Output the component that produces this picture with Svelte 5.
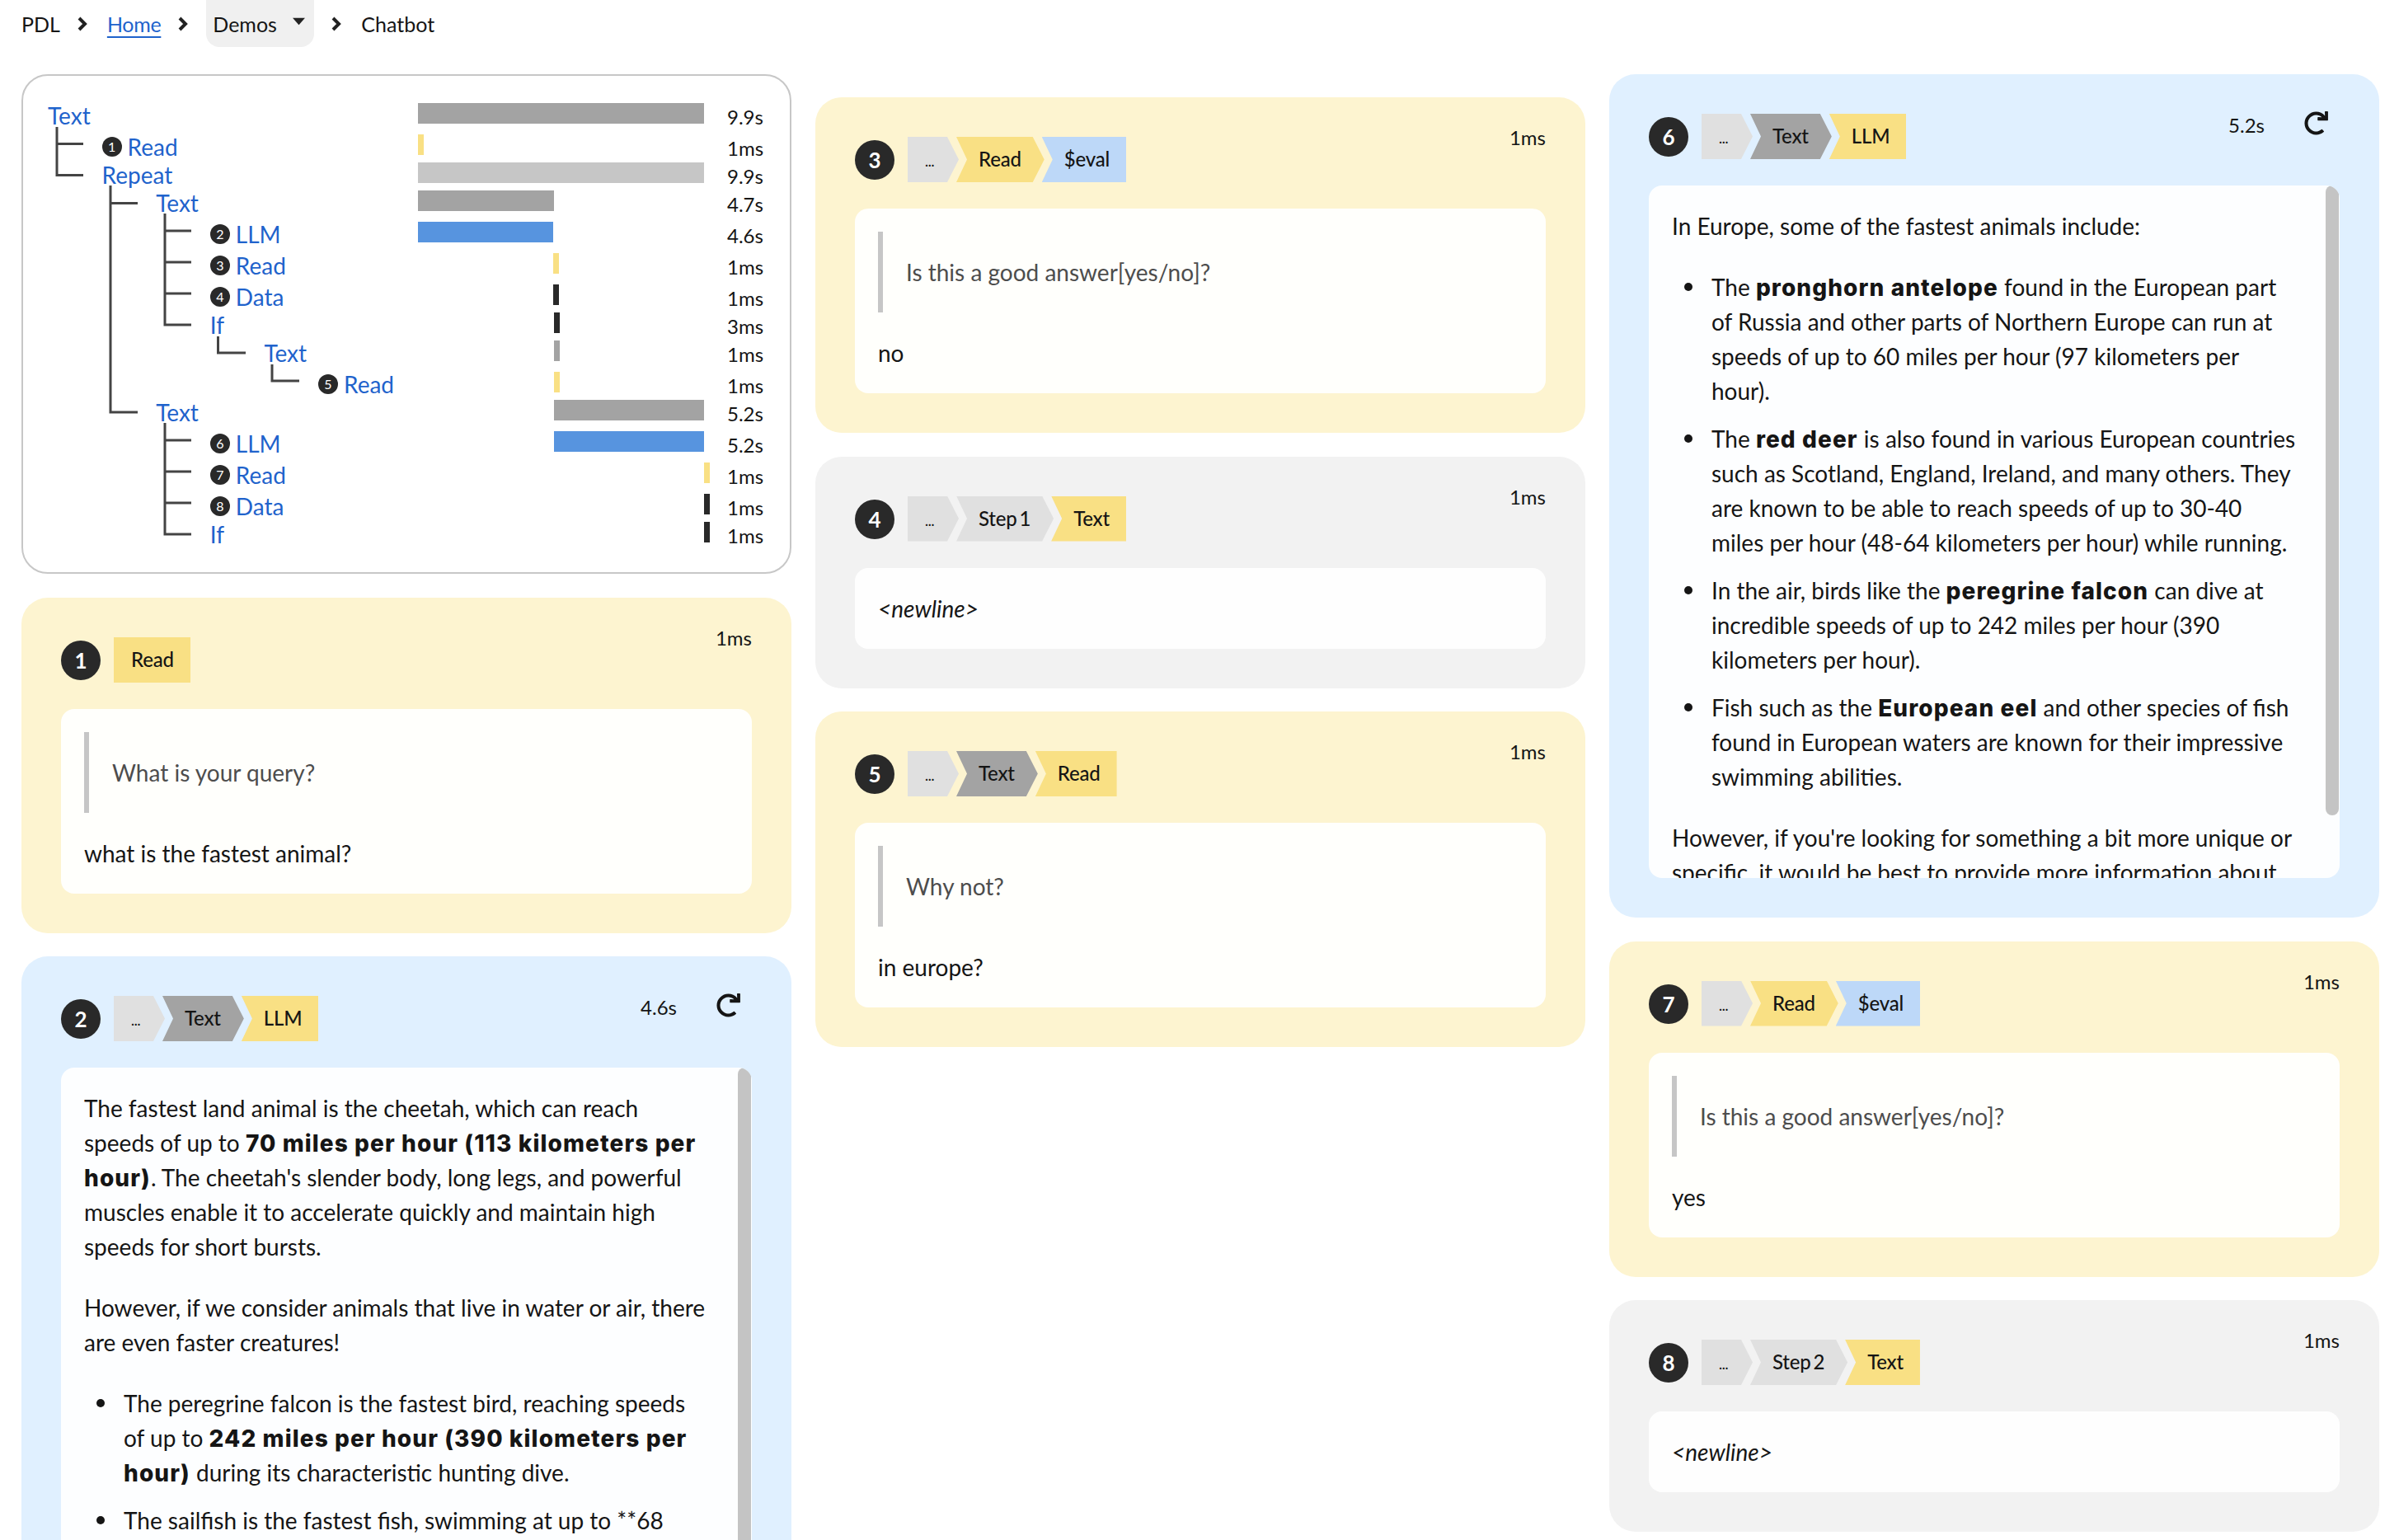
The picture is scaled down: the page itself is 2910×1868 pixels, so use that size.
<script>
  const tree = [
    { label: "Text", depth: 0, from: 0, to: 100, color: "grey", time: "9.9s" },
    { label: "Read", badge: 1, depth: 1, from: 0, to: 2, color: "yellow", time: "1ms" },
    { label: "Repeat", depth: 1, from: 0, to: 100, color: "light", time: "9.9s" },
    { label: "Text", depth: 2, from: 0, to: 47.6, color: "grey", time: "4.7s" },
    { label: "LLM", badge: 2, depth: 3, from: 0, to: 47.3, color: "blue", time: "4.6s" },
    { label: "Read", badge: 3, depth: 3, from: 47.3, to: 49.3, color: "yellow", time: "1ms" },
    { label: "Data", badge: 4, depth: 3, from: 47.3, to: 49.3, color: "dark", time: "1ms" },
    { label: "If", depth: 3, from: 47.6, to: 49.6, color: "dark", time: "3ms" },
    { label: "Text", depth: 4, from: 47.6, to: 49.6, color: "grey", time: "1ms" },
    { label: "Read", badge: 5, depth: 5, from: 47.6, to: 49.6, color: "yellow", time: "1ms" },
    { label: "Text", depth: 2, from: 47.6, to: 100, color: "grey", time: "5.2s" },
    { label: "LLM", badge: 6, depth: 3, from: 47.6, to: 100, color: "blue", time: "5.2s" },
    { label: "Read", badge: 7, depth: 3, from: 100, to: 102, color: "yellow", time: "1ms" },
    { label: "Data", badge: 8, depth: 3, from: 100, to: 102, color: "dark", time: "1ms" },
    { label: "If", depth: 3, from: 100, to: 102, color: "dark", time: "1ms" }
  ];

  const lines = [
    "M69 154V212.6H101M69 174.5H101",
    "M134 225V500H167M134 246.6H167",
    "M200 259V394H232M200 280H232M200 318H232M200 356H232",
    "M264.5 408V428H298",
    "M330 442V462H363",
    "M200 513V648H232M200 534H232M200 572H232M200 610H232"
  ];
</script>

{#snippet crumb()}
  <svg class="chevron" viewBox="0 0 14 20"><path d="M3 3l7 7-7 7" /></svg>
{/snippet}

{#snippet header(n, steps, time, redo)}
  <div class="head">
    <div class="num">{n}</div>
    <div class="steps">
      {#each steps as s, i}
        <div class="step {s.kind}" class:first={i === 0} class:last={i === steps.length - 1}>{s.text}</div>
      {/each}
    </div>
    <div class="time" class:bare={!redo}>{time}</div>
    {#if redo}
      <svg class="redo" viewBox="0 0 512 512"><path d="M500.33 0h-47.41a12 12 0 0 0-12 12.57l4 82.76A247.42 247.42 0 0 0 256 8C119.34 8 8.9 119.53 8 256.19 7.1 393.07 118.08 504 255 504c63.09 0 120.64-23.68 164.34-62.55a12 12 0 0 0 .49-17.45l-33.66-33.65a12 12 0 0 0-16.5-.49A175.9 175.9 0 1 1 256 80c47.4 0 90.5 18.7 122.1 49.1l-79.1-3.8a12 12 0 0 0-12.57 12v47.41a12 12 0 0 0 12 12h200.33a12 12 0 0 0 12-12V12a12 12 0 0 0-12-12z" /></svg>
    {/if}
  </div>
{/snippet}

{#snippet read(n, steps, question, answer)}
  <div class="card yellow">
    {@render header(n, steps, "1ms", false)}
    <div class="body">
      <blockquote>{question}</blockquote>
      <p>{answer}</p>
    </div>
  </div>
{/snippet}

{#snippet data(n, steps)}
  <div class="card plain">
    {@render header(n, steps, "1ms", false)}
    <div class="body"><p><em>&lt;newline&gt;</em></p></div>
  </div>
{/snippet}

<nav class="crumbs">
  <span>PDL</span>
  {@render crumb()}
  <a href="#home">Home</a>
  {@render crumb()}
  <div class="menu">Demos <svg class="caret" viewBox="0 0 20 12"><path d="M1 1h18l-9 10z" /></svg></div>
  {@render crumb()}
  <span>Chatbot</span>
</nav>

<main class="page">
  <div class="col">
    <section class="overview">
      <svg class="tree-lines" viewBox="28 92 931 601">
        {#each lines as d}<path {d} />{/each}
      </svg>
      {#each tree as row}
        <div class="row" class:tall={row.badge}>
          <div class="name" style="padding-left: {row.depth * 65.6}px">
            {#if row.badge}<span class="dot">{row.badge}</span>{/if}
            <a href="#step">{row.label}</a>
          </div>
          <div class="track">
            <div class="bar {row.color}" style="left: {row.from}%; width: {row.to - row.from}%"></div>
          </div>
          <div class="dur">{row.time}</div>
        </div>
      {/each}
    </section>

    {@render read(1, [{ text: "Read", kind: "yellow" }], "What is your query?", "what is the fastest animal?")}

    <div class="card blue">
      {@render header(2, [{ text: "...", kind: "pale" }, { text: "Text", kind: "grey" }, { text: "LLM", kind: "yellow" }], "4.6s", true)}
      <div class="body scroll">
        <p>The fastest land animal is the cheetah, which can reach<br />speeds of up to <strong>70 miles per hour (113 kilometers per<br />hour)</strong>. The cheetah's slender body, long legs, and powerful<br />muscles enable it to accelerate quickly and maintain high<br />speeds for short bursts.</p>
        <p>However, if we consider animals that live in water or air, there are even faster creatures!</p>
        <ul>
          <li>The peregrine falcon is the fastest bird, reaching speeds<br />of up to <strong>242 miles per hour (390 kilometers per<br />hour)</strong> during its characteristic hunting dive.</li>
          <li>The sailfish is the fastest fish, swimming at up to **68</li>
        </ul>
        <div class="thumb"></div>
      </div>
    </div>
  </div>

  <div class="col second">
    {@render read(3, [{ text: "...", kind: "pale" }, { text: "Read", kind: "yellow" }, { text: "$eval", kind: "sky" }], "Is this a good answer[yes/no]?", "no")}
    {@render data(4, [{ text: "...", kind: "pale" }, { text: "Step 1", kind: "silver" }, { text: "Text", kind: "yellow" }])}
    {@render read(5, [{ text: "...", kind: "pale" }, { text: "Text", kind: "grey" }, { text: "Read", kind: "yellow" }], "Why not?", "in europe?")}
  </div>

  <div class="col">
    <div class="card blue">
      {@render header(6, [{ text: "...", kind: "pale" }, { text: "Text", kind: "grey" }, { text: "LLM", kind: "yellow" }], "5.2s", true)}
      <div class="body scroll">
        <p>In Europe, some of the fastest animals include:</p>
        <ul>
          <li>The <strong>pronghorn antelope</strong> found in the European part<br />of Russia and other parts of Northern Europe can run at<br />speeds of up to 60 miles per hour (97 kilometers per<br />hour).</li>
          <li>The <strong>red deer</strong> is also found in various European countries<br />such as Scotland, England, Ireland, and many others. They<br />are known to be able to reach speeds of up to 30-40<br />miles per hour (48-64 kilometers per hour) while running.</li>
          <li>In the air, birds like the <strong>peregrine falcon</strong> can dive at<br />incredible speeds of up to 242 miles per hour (390<br />kilometers per hour).</li>
          <li>Fish such as the <strong>European eel</strong> and other species of fish<br />found in European waters are known for their impressive<br />swimming abilities.</li>
        </ul>
        <p>However, if you're looking for something a bit more unique or<br />specific, it would be best to provide more information about</p>
        <div class="thumb"></div>
      </div>
    </div>
    {@render read(7, [{ text: "...", kind: "pale" }, { text: "Read", kind: "yellow" }, { text: "$eval", kind: "sky" }], "Is this a good answer[yes/no]?", "yes")}
    {@render data(8, [{ text: "...", kind: "pale" }, { text: "Step 2", kind: "silver" }, { text: "Text", kind: "yellow" }])}
  </div>
</main>

<style>
  :global(body) {
    height: 1868px;
    overflow: hidden;
    background: #fff;
    color: #151515;
    font-family: "Lato", "Liberation Sans", sans-serif;
    font-size: 28px;
    line-height: 42px;
  }

  a {
    color: #1f63cc;
    text-decoration: none;
  }

  .crumbs {
    display: flex;
    align-items: center;
    height: 57px;
    padding-left: 26px;
    margin-bottom: 33px;
    font-size: 25px;
  }
  .crumbs a {
    letter-spacing: -0.3px;
    text-decoration: underline;
    text-underline-offset: 5px;
  }
  .chevron {
    width: 14px;
    height: 20px;
    margin: 0 23px 0 20px;
    flex: none;
  }
  .chevron path {
    fill: none;
    stroke: #222;
    stroke-width: 4;
  }
  .menu {
    display: flex;
    align-items: center;
    align-self: stretch;
    width: 131px;
    box-sizing: border-box;
    margin-left: -2px;
    padding-left: 8px;
    background: #f0f0f0;
    border-radius: 0 0 16px 16px;
  }
  .caret {
    width: 17px;
    height: 10px;
    margin: -6px 0 0 18px;
    fill: #222;
    flex: none;
  }

  .page {
    display: grid;
    grid-template-columns: repeat(3, 1fr);
    gap: 29px;
    padding: 0 24px 0 26px;
  }
  .col {
    display: flex;
    flex-direction: column;
    gap: 28.5px;
    min-width: 0;
  }
  .second {
    padding-top: 28px;
  }

  .overview {
    position: relative;
    padding: 28px 0 32px 30px;
    border: 2px solid #c7c7c7;
    border-radius: 32px;
  }
  .tree-lines {
    position: absolute;
    left: 0;
    top: 0;
    width: 931px;
    height: 601px;
    pointer-events: none;
  }
  .tree-lines path {
    fill: none;
    stroke: #444;
    stroke-width: 3;
  }
  .row {
    display: flex;
    align-items: flex-end;
    height: 34px;
  }
  .row.tall {
    height: 38px;
  }
  .name {
    display: flex;
    align-items: center;
    width: 449px;
    height: 34px;
    padding-top: 5px;
    flex: none;
    box-sizing: border-box;
  }
  .dot {
    display: flex;
    align-items: center;
    justify-content: center;
    width: 24px;
    height: 24px;
    margin-right: 7px;
    border-radius: 50%;
    background: #292929;
    color: #fff;
    font-size: 16px;
  }
  .track {
    position: relative;
    width: 347px;
    height: 25px;
    margin-bottom: 4px;
    flex: none;
  }
  .bar {
    position: absolute;
    top: 0;
    height: 100%;
  }
  .bar.grey { background: #a3a3a3; }
  .bar.light { background: #c6c6c6; }
  .bar.yellow { background: #f9e084; }
  .bar.blue { background: #5794df; }
  .bar.dark { background: #292929; }
  .dur {
    margin-left: 28px;
    height: 34px;
    padding-top: 5px;
    box-sizing: border-box;
    line-height: 34px;
    font-size: 24px;
  }

  .card {
    padding: 48px;
    border-radius: 32px;
  }
  .card.yellow { background: #fdf4d0; }
  .card.blue { background: #e0f0ff; }
  .card.plain { background: #f2f2f2; }

  .head {
    display: flex;
    align-items: flex-start;
    height: 55px;
    margin-bottom: 32px;
  }
  .num {
    display: flex;
    align-items: center;
    justify-content: center;
    width: 48px;
    height: 48px;
    margin: 4px 16px 0 0;
    border-radius: 50%;
    background: #292929;
    color: #fff;
    font-size: 26px;
    font-weight: 700;
    flex: none;
  }
  .steps {
    display: flex;
    flex: 1;
  }
  .step {
    height: 55px;
    line-height: 53px;
    padding: 0 28px 0 27px;
    margin-right: -3px;
    font-size: 24px;
    font-weight: 500;
    letter-spacing: -0.2px;
    word-spacing: -3px;
    clip-path: polygon(0 0, calc(100% - 14px) 0, 100% 50%, calc(100% - 14px) 100%, 0 100%, 13px 50%);
  }
  .step.first {
    padding-left: 21px;
    clip-path: polygon(0 0, calc(100% - 14px) 0, 100% 50%, calc(100% - 14px) 100%, 0 100%);
  }
  .step.last {
    padding-right: 20px;
    margin-right: 0;
    clip-path: polygon(0 0, 100% 0, 100% 100%, 0 100%, 13px 50%);
  }
  .step.first.last {
    clip-path: none;
  }
  .step.pale {
    background: #e0e0e0;
    font-size: 17px;
    width: 13px;
    line-height: 60px;
  }
  .step.grey { background: #a3a3a3; }
  .step.silver { background: #e0e0e0; }
  .step.yellow { background: #f9e084; }
  .step.sky { background: #bdd8f8; }

  .time {
    font-size: 24px;
    line-height: 28px;
  }
  .time.bare {
    margin-top: -13px;
  }
  .redo {
    width: 29px;
    height: 29px;
    margin: -3px 14px 0 48px;
    fill: #151515;
  }

  .body {
    position: relative;
    padding: 28px;
    border-radius: 16px;
    background: rgba(255, 255, 255, 0.92);
  }
  .scroll {
    height: 840px;
    box-sizing: border-box;
    padding-right: 44px;
    overflow: hidden;
  }
  .thumb {
    position: absolute;
    top: 0;
    right: 1px;
    width: 16px;
    height: 764px;
    border-radius: 8px;
    background: #c4c4c4;
  }
  p {
    margin: 0 0 32px;
  }
  .body > p:last-child {
    margin-bottom: 0;
  }
  ul {
    margin: 0 0 32px;
    padding-left: 48px;
    list-style: none;
  }
  li {
    position: relative;
    margin-bottom: 16px;
  }
  li::before {
    content: "";
    position: absolute;
    left: -33px;
    top: 16px;
    width: 10px;
    height: 10px;
    border-radius: 50%;
    background: #151515;
  }
  li:last-child {
    margin-bottom: 0;
  }
  blockquote {
    margin: 0 0 28px;
    padding: 28px;
    border-left: 6px solid #c6c6c6;
    color: #4d4d4d;
  }
  strong {
    font-family: "Inter", "Lato", sans-serif;
    font-weight: 800;
    letter-spacing: 1.1px;
    line-height: 1;
  }
</style>
